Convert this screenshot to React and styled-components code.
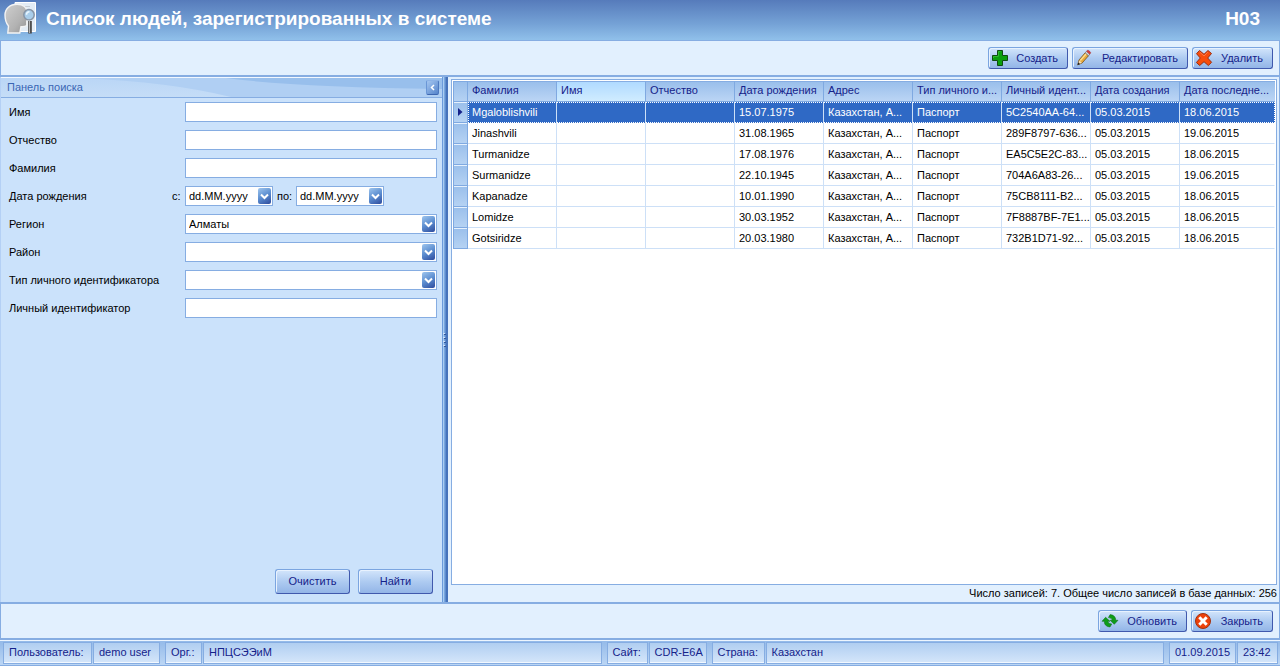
import React from 'react';
import styled, { createGlobalStyle, css } from 'styled-components';

const GlobalStyle = createGlobalStyle`
  *, *::before, *::after { box-sizing: border-box; }
  body {
    margin: 0;
    background: #e1efff;
    color: #000;
    font: 11px/14px "Liberation Sans", Arial, sans-serif;
  }
  button, input, select { font: inherit; margin: 0; }
`;

const Page = styled.div`
  min-height: 100vh;
  display: flex;
  flex-direction: column;
`;

const Header = styled.header`
  display: flex;
  align-items: center;
  gap: 10px;
  height: 40px;
  padding: 0 20px 2px 4px;
  background: linear-gradient(#567bbb, #75a2d6 60%, #90c0ea);
  color: #fff;
`;

const Title = styled.h1`
  flex: 1;
  margin: 0;
  font-size: 19px;
  line-height: 24px;
`;

const ScreenCode = styled.strong`
  font-size: 19px;
  line-height: 24px;
`;

const Toolbar = styled.div`
  display: flex;
  align-items: center;
  justify-content: flex-end;
  gap: 4px;
  height: 37px;
  padding-right: 6px;
  background: #e2f0fe;
  border: 1px solid #86ade2;
  border-bottom-width: 2px;
`;

const Main = styled.main`
  flex: 1;
  display: flex;
  min-height: 0;
`;

const bevel = css`
  border: 1px solid;
  border-color: #7ba5e0 #4059ad #4059ad #7ba5e0;
  border-radius: 3px;
  background: linear-gradient(#d3e5fb, #aecbf1 50%, #93b5e7);
  box-shadow: inset 1px 1px #e8f2fe;
  color: #15228a;
`;

const Button = styled.button`
  ${bevel}
  display: inline-flex;
  align-items: center;
  justify-content: center;
  width: ${(p) => p.$width};
  height: ${(p) => (p.$tall ? '25px' : '22px')};
  padding: ${(p) => (p.$tall ? '0 0 2px' : '0 9px 0 2px')};
  white-space: nowrap;
  svg { flex: none; }
  span { flex: 1; text-align: ${(p) => (p.$tall ? 'center' : 'right')}; }
`;

const SearchPanel = styled.section`
  flex: none;
  display: flex;
  flex-direction: column;
  width: 442px;
  background: #cbe2fb;
  border-left: 1px solid #b4d0f5;
`;

const PanelHeader = styled.div`
  position: relative;
  display: flex;
  align-items: center;
  justify-content: space-between;
  height: 21px;
  padding: 0 3px 0 6px;
  border-top: 1px solid #f2f8ff;
  border-bottom: 1px solid #86ade2;
  background: linear-gradient(#bad6f6, #c5ddf7);
  color: #3a66b4;
`;

const Swoosh = styled.svg`
  position: absolute;
  inset: 0;
  width: 100%;
  height: 100%;
`;

const PanelTitle = styled.h2`
  position: relative;
  margin: 0;
  padding-bottom: 2px;
  font-size: 11px;
  font-weight: 400;
`;

const CollapseButton = styled.button`
  position: relative;
  display: grid;
  place-items: center;
  width: 13px;
  height: 15px;
  padding: 0;
  border: 1px solid #6a96d6;
  border-color: #8cb2e6 #4d78bf #3d66b0 #6a96d6;
  border-radius: 2px;
  background: linear-gradient(135deg, #a4c6f0, #5584cc);
`;

const Fields = styled.form`
  flex: 1;
  display: flex;
  flex-direction: column;
  gap: 8px;
  padding: 4px 5px 8px 8px;
`;

const Field = styled.div`
  display: flex;
  align-items: center;
  height: 20px;
`;

const FieldLabel = styled.label`
  flex: none;
  width: ${(p) => (p.$short ? '163px' : '176px')};
`;

const SmallLabel = styled.label`
  flex: none;
  margin: 0 ${(p) => (p.$gap ? '4px' : '0')};
  width: ${(p) => (p.$gap ? '15px' : '13px')};
`;

const inputBox = css`
  height: 20px;
  padding: 0 3px;
  border: 1px solid #86ade2;
  border-radius: 0;
  background: #fff;
  color: #000;
  outline: 0;
`;

const TextInput = styled.input`
  ${inputBox}
  flex: 1;
  min-width: 0;
`;

const Combo = styled.div`
  position: relative;
  display: flex;
  flex: ${(p) => (p.$width ? 'none' : '1')};
  width: ${(p) => p.$width || 'auto'};
`;

const Select = styled.select`
  ${inputBox}
  appearance: none;
  width: 100%;
`;

const DateInput = styled.input`
  ${inputBox}
  width: 100%;
`;

const DropGlyph = styled.span`
  position: absolute;
  top: 2px;
  right: 2px;
  display: grid;
  place-items: center;
  width: 13px;
  height: 16px;
  border-radius: 2px;
  background: linear-gradient(150deg, #9fc6ee, #5b8dd0 50%, #2d4a9c);
  pointer-events: none;
`;

const FormActions = styled.div`
  display: flex;
  gap: 8px;
  margin-top: auto;
  padding-right: 4px;
  justify-content: flex-end;
`;

const Splitter = styled.div`
  flex: none;
  display: grid;
  place-items: center;
  width: 6px;
  background: linear-gradient(90deg, #6b9bdb 0 1px, #a9cdf3 1px 2px, #79a7de 2px 3px, #5f8ecf 3px 4px, #4673bb 4px 6px);
`;

const Results = styled.section`
  flex: 1;
  min-width: 0;
  display: flex;
  flex-direction: column;
  padding: 2px 2px 0 3px;
  background: #e2f0fe;
  border-right: 1px solid #86ade2;
`;

const GridFrame = styled.div`
  flex: 1;
  padding: 1px;
  border: 1px solid #86ade2;
  background: #fff;
`;

const Table = styled.table`
  width: 100%;
  table-layout: fixed;
  border-collapse: separate;
  border-spacing: 0;
`;

const MarkerCol = styled.col`
  width: 15px;
`;

const DataCol = styled.col`
  width: ${(p) => (p.$last ? 'auto' : '89px')};
`;

const cell = css`
  height: 21px;
  padding: 0 0 0 4px;
  text-align: left;
  font-weight: 400;
  white-space: nowrap;
  overflow: hidden;
`;

const HeadCell = styled.th`
  ${cell}
  padding-bottom: 3px;
  color: #15228a;
  border-right: 1px solid #7fa9e1;
  border-bottom: 1px solid #7fa9e1;
  border-top: 1px solid #86ade2;
  background: ${(p) =>
    p.$hot
      ? 'linear-gradient(#b0daff, #d0ecff)'
      : 'linear-gradient(#9abfeb, #bbd5f5)'};
  &:last-child { border-right: 0; }
`;

const MarkerCell = styled.th`
  height: 21px;
  padding: 0;
  border: solid #7fa9e1;
  border-width: ${(p) => (p.$head ? '1px' : '0 1px 1px')};
  background: linear-gradient(#9abfeb, #b5d2f3);
  box-shadow: ${(p) => (p.$head ? 'none' : 'inset 0 1px #e6f1fd')};
  svg { display: block; margin: 0 auto; }
`;

const Cell = styled.td`
  ${cell}
  border-right: 1px solid #cde0f7;
  border-bottom: 1px solid #cde0f7;
  &:last-child { border-right-color: transparent; }
`;

const Row = styled.tr`
  ${(p) =>
    p.$selected &&
    css`
      color: #fff;
      ${Cell} {
        padding-bottom: 2px;
        background: #2f69c5;
        border-top: 1px dotted #fff;
        border-bottom: 1px dotted #fff;
      }
      ${Cell}:last-child { border-right: 1px dotted #fff; }
      ${Cell}:nth-child(2) { border-left: 1px dotted #fff; padding-left: 3px; }
    `}
`;

const Summary = styled.p`
  margin: 0;
  padding-top: 1px;
  height: 17px;
  text-align: right;
  white-space: nowrap;
`;

const BottomBar = styled(Toolbar)`
  height: 38px;
  border-top-width: 2px;
`;

const StatusBar = styled.footer`
  display: flex;
  gap: 1px;
  height: 26px;
  padding: 1px 2px 1px 3px;
  border-top: 1px solid #eef6ff;
  border-bottom: 1px solid #86ade2;
  background: linear-gradient(#94bae9, #bbd6f5);
  color: #15228a;
`;

const StatusCell = styled.div`
  flex: ${(p) => (p.$width ? 'none' : '1')};
  width: ${(p) => p.$width || 'auto'};
  margin-right: ${(p) => (p.$end ? '4px' : '0')};
  padding: 2px 0 0 5px;
  border: 1px solid #86ade2;
  box-shadow: inset 0 -1px #f2f8ff;
  background: linear-gradient(#b0cef1, #d5e6fa);
  white-space: nowrap;
`;

function PersonSearchIcon() {
  return (
    <svg width="32" height="34" viewBox="0 0 32 34" aria-hidden="true">
      <defs>
        <linearGradient id="head" x1="0" y1="0" x2="1" y2="1">
          <stop offset="0" stopColor="#cfcfcf" />
          <stop offset="0.6" stopColor="#b2b2b2" />
          <stop offset="1" stopColor="#8e8e8e" />
        </linearGradient>
      </defs>
      <path d="M11 .500h20.500v29H11z" fill="#e3ecf5" stroke="#fff" />
      <path d="M17 4.500h9M22 7.500h4" stroke="#c6cdd5" />
      <path d="M13 2.200c6 0 10 3.300 10.300 8.300l-.3 4 1.800 3.500-2 1v4.500q-2.500 1.500-5.800 1.200L15.800 31H3.800l.7-7C1.500 20.500 1 17.500 1 13 1 6.500 6 2.200 13 2.200z" fill="url(#head)" stroke="#f3f3f3" strokeWidth="1.400" />
      <path d="M26 19v12.500" stroke="#444" strokeWidth="3.600" />
      <path d="M25.500 19v12" stroke="#b5b5b5" strokeWidth="1.200" />
      <circle cx="25" cy="12.800" r="5.200" fill="#a9cdea" stroke="#8795a6" strokeWidth="1.500" />
      <path d="M22.500 12.800a3 3 0 0 1 3-3" fill="none" stroke="#e9f6ff" strokeWidth="1.500" />
    </svg>
  );
}

function PlusIcon() {
  return (
    <svg width="18" height="18" viewBox="0 0 18 18" aria-hidden="true">
      <path d="M6.500 1.500h5v5h5v5h-5v5h-5v-5h-5v-5h5z" fill="#0a9f0c" stroke="#104a12" />
      <path d="M7.500 7V2.500h2M2.500 9V7.500h5" fill="none" stroke="#2fba30" />
    </svg>
  );
}

function PencilIcon() {
  return (
    <svg width="18" height="18" viewBox="0 0 18 18" aria-hidden="true">
      <path d="M2.800 15.800l1.200-4.800L10.200 3.800l3.300 2.900-6.300 7.200z" fill="#e8ab3e" stroke="#7c5a2a" strokeWidth="0.900" />
      <path d="M5.300 11.500l5.900-6.700" stroke="#ffdf8e" strokeWidth="1.300" />
      <path d="M3 15.500l1.200-4 2.700 2.300z" fill="#f5dfb9" />
      <path d="M2.500 16.300l.7-3.100 1.900 1.700z" fill="#222" />
      <path d="M10.200 3.800l1.300-1.500 3.300 2.900-1.300 1.500z" fill="#d5d9df" stroke="#666" strokeWidth="0.600" />
      <path d="M11.500 2.300l.6-.7q.8-.8 1.700 0l1.400 1.200q.9.800.2 1.700l-.6.700z" fill="#d93a3b" stroke="#8f3030" strokeWidth="0.400" />
    </svg>
  );
}

function CrossIcon() {
  return (
    <svg width="18" height="18" viewBox="0 0 18 18" aria-hidden="true">
      <path d="M4.500 1.500L9 5.300l4-3.800 3.500 3L12.700 9l3.900 4.300-3.300 3.200L9 12.700l-4.300 3.800-3.300-3L5.300 9 1.500 4.700z" fill="#f84c0b" stroke="#9a2e12" strokeLinejoin="round" />
      <path d="M4.600 3L9 7l3.800-3.800" fill="none" stroke="#ff7a48" />
    </svg>
  );
}

function RefreshIcon() {
  return (
    <svg width="18" height="18" viewBox="0 0 18 18" aria-hidden="true">
      <path d="M1 9.300L4.600 5.300 9 9.300H6.800q.3 2.500 3.900 2.700l-1.700 3Q3.400 14.500 3.200 9.300z" fill="#0e9c18" stroke="#08680e" strokeWidth="0.500" />
      <path d="M17 8.300l-3.700 4-4.200-4h2.200Q11 5.900 7.400 5.600l1.700-3q5.500.5 5.700 5.700z" fill="#0e9c18" stroke="#08680e" strokeWidth="0.500" />
    </svg>
  );
}

function CloseIcon() {
  return (
    <svg width="18" height="18" viewBox="0 0 18 18" aria-hidden="true">
      <circle cx="9" cy="9" r="7.500" fill="#ed410b" stroke="#a0310f" />
      <path d="M5.300 5.300l7.400 7.400M12.700 5.300l-7.400 7.400" stroke="#fff" strokeWidth="3" />
    </svg>
  );
}

function DropArrow() {
  return (
    <DropGlyph>
      <svg width="9" height="7" viewBox="0 0 9 7" aria-hidden="true">
        <path d="M1 1.500l3.500 3.500L8 1.500" fill="none" stroke="#fff" strokeWidth="2" />
      </svg>
    </DropGlyph>
  );
}

const headings = [
  'Фамилия', 'Имя', 'Отчество', 'Дата рождения', 'Адрес',
  'Тип личного и...', 'Личный идент...', 'Дата создания', 'Дата последне...',
];

const people = [
  ['Mgaloblishvili', '15.07.1975', '5C2540AA-64...', '18.06.2015'],
  ['Jinashvili', '31.08.1965', '289F8797-636...', '19.06.2015'],
  ['Turmanidze', '17.08.1976', 'EA5C5E2C-83...', '18.06.2015'],
  ['Surmanidze', '22.10.1945', '704A6A83-26...', '19.06.2015'],
  ['Kapanadze', '10.01.1990', '75CB8111-B2...', '18.06.2015'],
  ['Lomidze', '30.03.1952', '7F8887BF-7E1...', '18.06.2015'],
  ['Gotsiridze', '20.03.1980', '732B1D71-92...', '18.06.2015'],
];

function TextField({ id, label }) {
  return (
    <Field>
      <FieldLabel htmlFor={id}>{label}</FieldLabel>
      <TextInput id={id} type="text" />
    </Field>
  );
}

function SelectField({ id, label, value = '' }) {
  return (
    <Field>
      <FieldLabel htmlFor={id}>{label}</FieldLabel>
      <Combo>
        <Select id={id} defaultValue={value}>
          <option value={value}>{value}</option>
        </Select>
        <DropArrow />
      </Combo>
    </Field>
  );
}

function DateField({ id }) {
  return (
    <Combo $width="88px">
      <DateInput id={id} type="text" defaultValue="dd.MM.yyyy" />
      <DropArrow />
    </Combo>
  );
}

export default function App() {
  return (
    <Page>
      <GlobalStyle />
      <Header>
        <PersonSearchIcon />
        <Title>Список людей, зарегистрированных в системе</Title>
        <ScreenCode>H03</ScreenCode>
      </Header>
      <Toolbar>
        <Button type="button" $width="80px"><PlusIcon /><span>Создать</span></Button>
        <Button type="button" $width="116px"><PencilIcon /><span>Редактировать</span></Button>
        <Button type="button" $width="81px"><CrossIcon /><span>Удалить</span></Button>
      </Toolbar>
      <Main>
        <SearchPanel>
          <PanelHeader>
            <Swoosh viewBox="0 0 441 19" preserveAspectRatio="none" aria-hidden="true">
              <path d="M80 0Q170 4 230 19H441V0z" fill="#b0cff3" />
              <path d="M225 0Q290 9 441 11V0z" fill="#98bfec" />
            </Swoosh>
            <PanelTitle>Панель поиска</PanelTitle>
            <CollapseButton type="button" aria-label="Свернуть">
              <svg width="5" height="7" viewBox="0 0 5 7" aria-hidden="true">
                <path d="M4 1L1.500 3.500 4 6" fill="none" stroke="#fff" strokeWidth="1.500" />
              </svg>
            </CollapseButton>
          </PanelHeader>
          <Fields>
            <TextField id="name" label="Имя" />
            <TextField id="patronymic" label="Отчество" />
            <TextField id="surname" label="Фамилия" />
            <Field>
              <FieldLabel as="span" $short>Дата рождения</FieldLabel>
              <SmallLabel htmlFor="from">с:</SmallLabel>
              <DateField id="from" />
              <SmallLabel htmlFor="to" $gap>по:</SmallLabel>
              <DateField id="to" />
            </Field>
            <SelectField id="region" label="Регион" value="Алматы" />
            <SelectField id="district" label="Район" />
            <SelectField id="idtype" label="Тип личного идентификатора" />
            <TextField id="personal" label="Личный идентификатор" />
            <FormActions>
              <Button type="reset" $tall $width="75px"><span>Очистить</span></Button>
              <Button type="button" $tall $width="75px"><span>Найти</span></Button>
            </FormActions>
          </Fields>
        </SearchPanel>
        <Splitter>
          <svg width="4" height="16" viewBox="0 0 4 16" aria-hidden="true">
            <path d="M1 2.500h2M1 6.500h2M1 10.500h2M1 14.500h2" stroke="#33589c" />
            <path d="M0 1.500h2M0 5.500h2M0 9.500h2M0 13.500h2" stroke="#cfe3fa" />
          </svg>
        </Splitter>
        <Results>
          <GridFrame>
            <Table>
              <colgroup>
                <MarkerCol />
                {headings.map((h, i) => <DataCol key={h} $last={i === 8} />)}
              </colgroup>
              <thead>
                <tr>
                  <MarkerCell $head as="td" />
                  {headings.map((h) => <HeadCell key={h} $hot={h === 'Имя'}>{h}</HeadCell>)}
                </tr>
              </thead>
              <tbody>
                {people.map(([surname, born, code, changed], i) => (
                  <Row key={surname} $selected={i === 0}>
                    <MarkerCell as="td">
                      {i === 0 && (
                        <svg width="5" height="8" viewBox="0 0 5 8" aria-hidden="true">
                          <path d="M0 0l4.500 4L0 8z" fill="#15228a" />
                        </svg>
                      )}
                    </MarkerCell>
                    <Cell>{surname}</Cell>
                    <Cell />
                    <Cell />
                    <Cell>{born}</Cell>
                    <Cell>Казахстан, А...</Cell>
                    <Cell>Паспорт</Cell>
                    <Cell>{code}</Cell>
                    <Cell>05.03.2015</Cell>
                    <Cell>{changed}</Cell>
                  </Row>
                ))}
              </tbody>
            </Table>
          </GridFrame>
          <Summary>Число записей: 7. Общее число записей в базе данных: 256</Summary>
        </Results>
      </Main>
      <BottomBar>
        <Button type="button" $width="89px"><RefreshIcon /><span>Обновить</span></Button>
        <Button type="button" $width="82px"><CloseIcon /><span>Закрыть</span></Button>
      </BottomBar>
      <StatusBar>
        <StatusCell $width="89px">Пользователь:</StatusCell>
        <StatusCell $width="67px" $end>demo user</StatusCell>
        <StatusCell $width="37px">Орг.:</StatusCell>
        <StatusCell $end>НПЦСЭЭиМ</StatusCell>
        <StatusCell $width="41px">Сайт:</StatusCell>
        <StatusCell $width="58px" $end>CDR-E6A</StatusCell>
        <StatusCell $width="53px">Страна:</StatusCell>
        <StatusCell $end>Казахстан</StatusCell>
        <StatusCell $width="67px">01.09.2015</StatusCell>
        <StatusCell $width="41px">23:42</StatusCell>
      </StatusBar>
    </Page>
  );
}
